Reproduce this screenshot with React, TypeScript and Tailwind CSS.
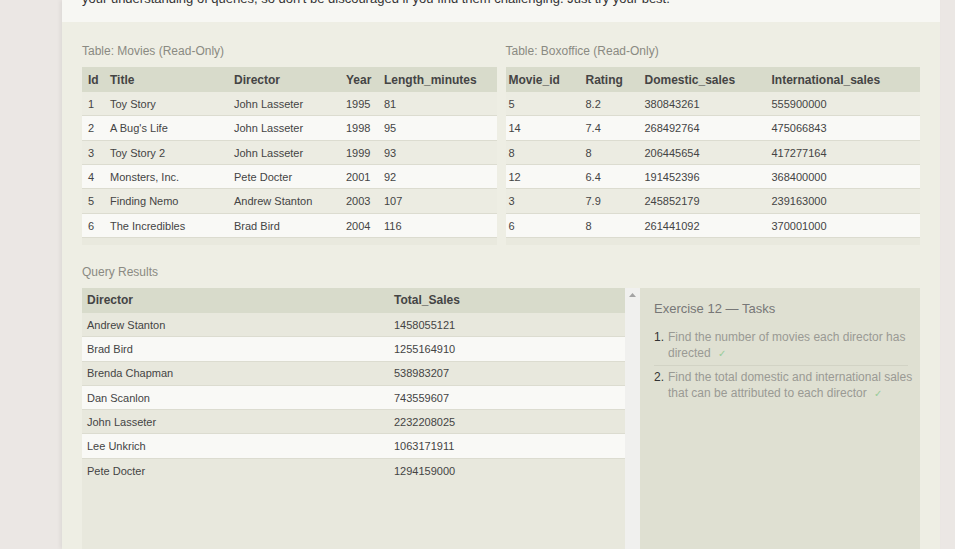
import React from 'react'

const font = { fontFamily: '"Liberation Sans", Arial, sans-serif' }

const movies = [
  ['1', 'Toy Story', 'John Lasseter', '1995', '81'],
  ['2', "A Bug's Life", 'John Lasseter', '1998', '95'],
  ['3', 'Toy Story 2', 'John Lasseter', '1999', '93'],
  ['4', 'Monsters, Inc.', 'Pete Docter', '2001', '92'],
  ['5', 'Finding Nemo', 'Andrew Stanton', '2003', '107'],
  ['6', 'The Incredibles', 'Brad Bird', '2004', '116'],
]

const boxoffice = [
  ['5', '8.2', '380843261', '555900000'],
  ['14', '7.4', '268492764', '475066843'],
  ['8', '8', '206445654', '417277164'],
  ['12', '6.4', '191452396', '368400000'],
  ['3', '7.9', '245852179', '239163000'],
  ['6', '8', '261441092', '370001000'],
]

const results = [
  ['Andrew Stanton', '1458055121'],
  ['Brad Bird', '1255164910'],
  ['Brenda Chapman', '538983207'],
  ['Dan Scanlon', '743559607'],
  ['John Lasseter', '2232208025'],
  ['Lee Unkrich', '1063171911'],
  ['Pete Docter', '1294159000'],
]

// column templates (px) for each table
const movieCols = 'grid-cols-[22px_124px_112px_38px_1fr]'
const boxCols = 'grid-cols-[74px_59px_127px_1fr]'
const resultCols = 'grid-cols-[307px_1fr]'

function DataTable({ cols, head, rows, firstPad }: { cols: string; head: string[]; rows: string[][]; firstPad: string }) {
  return (
    <div className="bg-[#e9e9de] pb-[7px]">
      <div className={`grid ${cols} h-[25px] items-center bg-[#d8dbcb] text-[12px] font-bold text-[#444]`}>
        {head.map((h, i) => (
          <div key={h} className={i === 0 ? firstPad : 'pl-[6px]'}>{h}</div>
        ))}
      </div>
      {rows.map((r, ri) => (
        <div
          key={ri}
          className={`grid ${cols} h-[24.33px] items-center border-b border-[#dcdcd0] pt-[1px] text-[11px] text-[#444] ${ri % 2 === 0 ? 'bg-[#ececE2]' : 'bg-[#f9f9f6]'}`}
        >
          {r.map((c, ci) => (
            <div key={ci} className={ci === 0 ? firstPad : 'pl-[6px]'}>{c}</div>
          ))}
        </div>
      ))}
    </div>
  )
}

export default function App() {
  return (
    <div className="h-[549px] w-full overflow-hidden bg-[#ebe7e4]" style={font}>
      <div className="ml-[62px] w-[878px] h-full shadow-[-2px_0_4px_rgba(0,0,0,0.06)]">
        {/* Intro text, scrolled mostly out of view */}
        <div className="h-[22px] overflow-hidden bg-[#f7f7f3] px-[20px]">
          <p className="-mt-[9px] text-[13px] leading-[16px] text-[#333]">
            your understanding of queries, so don't be discouraged if you find them challenging. Just try your best.
          </p>
        </div>

        <div className="h-[527px] bg-[#eeeee4] px-[20px] pt-[21px]">
          <div className="grid grid-cols-2 gap-[9px]">
            <div>
              <div className="mb-[8px] text-[12px] leading-[16px] text-[#8a8a82]">Table: Movies (Read-Only)</div>
              <DataTable
                cols={movieCols}
                head={['Id', 'Title', 'Director', 'Year', 'Length_minutes']}
                rows={movies}
                firstPad="pl-[6px]"
              />
            </div>
            <div>
              <div className="mb-[8px] text-[12px] leading-[16px] text-[#8a8a82]">Table: Boxoffice (Read-Only)</div>
              <DataTable
                cols={boxCols}
                head={['Movie_id', 'Rating', 'Domestic_sales', 'International_sales']}
                rows={boxoffice}
                firstPad="pl-[3px]"
              />
            </div>
          </div>

          <div className="mt-[19px] mb-[8px] text-[12px] leading-[16px] text-[#8a8a82]">Query Results</div>

          <div className="flex h-[270px]">
            {/* Results table with scrollbar */}
            <div className="flex-1 bg-[#e8e8dd]">
              <div className={`grid ${resultCols} h-[25px] items-center bg-[#d8dbcb] text-[12px] font-bold text-[#444]`}>
                <div className="pl-[5px]">Director</div>
                <div className="pl-[5px]">Total_Sales</div>
              </div>
              {results.map((r, i) => (
                <div
                  key={r[0]}
                  className={`grid ${resultCols} h-[24.3px] items-center pt-[1px] text-[11px] text-[#444] ${i < results.length - 1 ? 'border-b border-[#dcdcd0]' : ''} ${i % 2 === 0 ? 'bg-[#e8e8dd]' : 'bg-[#f9f9f6]'}`}
                >
                  <div className="pl-[5px]">{r[0]}</div>
                  <div className="pl-[5px]">{r[1]}</div>
                </div>
              ))}
            </div>
            <div className="flex w-[15px] flex-col items-center justify-between bg-[#f0f0ee] py-[5px]">
              <svg width="7" height="4" viewBox="0 0 7 4"><path d="M0 4 L3.5 0 L7 4 Z" fill="#a3a3a3" /></svg>
              <svg width="7" height="4" viewBox="0 0 7 4"><path d="M0 0 L7 0 L3.5 4 Z" fill="#a3a3a3" /></svg>
            </div>

            {/* Tasks */}
            <div className="w-[280px] bg-[#dfe0d2] pl-[14px] pr-[6px] pt-[13px]">
              <div className="text-[13px] leading-[16px] text-[#777]">Exercise 12 — Tasks</div>
              <ol className="mt-[12px] text-[12px] leading-[16.5px]">
                <li className="mr-[6px] flex border-b border-[#d2d3c5] pb-[2px]">
                  <span className="w-[14px] shrink-0 text-[#333]">1.</span>
                  <span className="text-[#9a9a94]">
                    Find the number of movies each director has directed
                    <span className="ml-[7px] text-[10px] text-[#99cc99]">✓</span>
                  </span>
                </li>
                <li className="flex pt-[3px]">
                  <span className="w-[14px] shrink-0 text-[#333]">2.</span>
                  <span className="text-[#9a9a94]">
                    Find the total domestic and international sales that can be attributed to each director
                    <span className="ml-[7px] text-[10px] text-[#99cc99]">✓</span>
                  </span>
                </li>
              </ol>
            </div>
          </div>
        </div>
      </div>
    </div>
  )
}
